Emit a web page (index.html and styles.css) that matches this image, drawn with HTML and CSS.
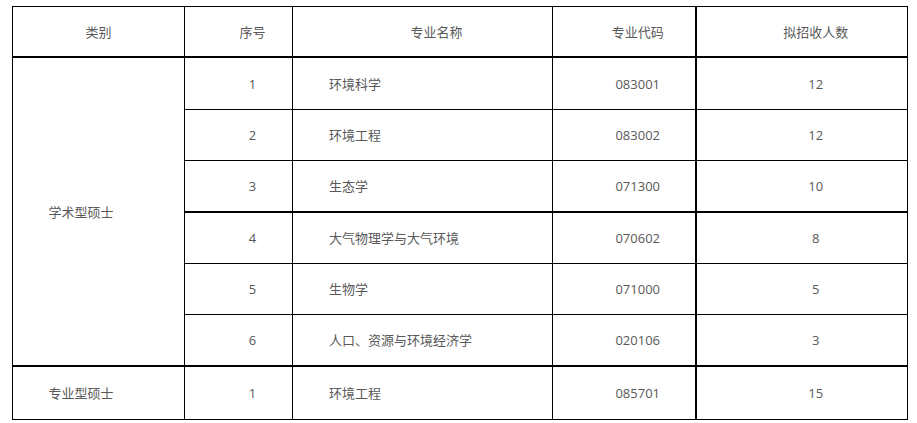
FILE: index.html
```html
<!DOCTYPE html>
<html lang="zh-CN">
<head>
<meta charset="utf-8">
<title>招生专业</title>
<link rel="stylesheet" href="styles.css">
</head>
<body>
<div class="wrap">
<table class="plan">
  <colgroup>
    <col class="c1"><col class="c2"><col class="c3"><col class="c4"><col class="c5">
  </colgroup>
  <thead>
    <tr class="head">
      <th class="cat">类别</th>
      <th>序号</th>
      <th>专业名称</th>
      <th class="code">专业代码</th>
      <th class="num">拟招收人数</th>
    </tr>
  </thead>
  <tbody>
    <tr class="r-t">
      <td class="cat-body" rowspan="6">学术型硕士</td>
      <td>1</td><td class="name">环境科学</td><td class="code">083001</td><td class="num">12</td>
    </tr>
    <tr class="r-n">
      <td>2</td><td class="name">环境工程</td><td class="code">083002</td><td class="num">12</td>
    </tr>
    <tr class="r-n">
      <td>3</td><td class="name">生态学</td><td class="code">071300</td><td class="num">10</td>
    </tr>
    <tr class="r-n thick-top">
      <td>4</td><td class="name">大气物理学与大气环境</td><td class="code">070602</td><td class="num">8</td>
    </tr>
    <tr class="r-n">
      <td>5</td><td class="name">生物学</td><td class="code">071000</td><td class="num">5</td>
    </tr>
    <tr class="r-n">
      <td>6</td><td class="name">人口、资源与环境经济学</td><td class="code">020106</td><td class="num">3</td>
    </tr>
    <tr class="r-last thick-top">
      <td class="cat-body">专业型硕士</td>
      <td>1</td><td class="name">环境工程</td><td class="code">085701</td><td class="num">15</td>
    </tr>
  </tbody>
</table>
</div>
</body>
</html>
```

FILE: styles.css
```css
html, body {
  margin: 0;
  padding: 0;
  background: #ffffff;
}

.wrap {
  padding: 6px 0 0 12px;
}

.plan {
  border-collapse: collapse;
  table-layout: fixed;
  width: 895px;
  font-family: "Open Sans", "Noto Sans CJK SC", sans-serif;
  font-size: 13px;
  color: #595959;
}

.c1 { width: 172px; }
.c2 { width: 108px; }
.c3 { width: 260px; }
.c4 { width: 143px; }
.c5 { width: 212px; }

.plan th,
.plan td {
  border: 1px solid #000;
  padding: 0 0 0 28px;
  text-align: center;
  vertical-align: middle;
  font-weight: normal;
  line-height: 18px;
}

.plan th.cat {
  padding: 0;
}

.plan td.cat-body {
  padding: 0 35px 0 0;
}

.plan td.name {
  text-align: left;
  padding-left: 36px;
}

.plan .num {
  border-left-width: 2px;
}

.head th {
  border-bottom-width: 2px;
  height: 49px;
}

.r-t td { height: 51px; }
.r-n td { height: 50px; }
.r-last td { height: 52px; }

.thick-top td {
  border-top-width: 2px;
}
```
